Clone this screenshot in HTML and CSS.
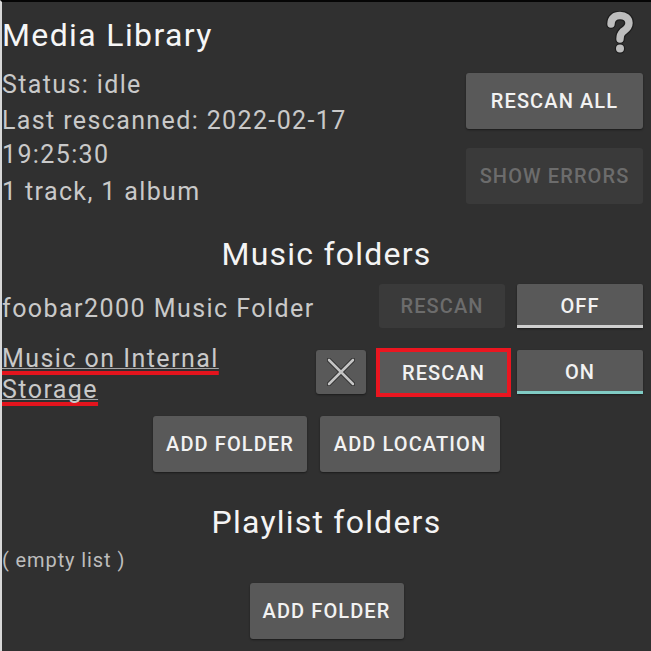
FILE: index.html
```html
<!DOCTYPE html>
<html>
<head>
<meta charset="utf-8">
<link rel="stylesheet" href="styles.css">
</head>
<body>
<div class="page">
  <header class="head">
    <h1 class="title">Media Library</h1>
    <svg class="help" viewBox="0 0 30 44" width="30" height="44" aria-label="help">
      <path class="help-out" d="M7 13 C7 7 11 4.5 16 4.5 C21 4.5 25 7 25 12 C25 17 21 19 18.5 21 C16.5 23 16 25 16 28"/>
      <circle class="help-dot-out" cx="16" cy="37.5" r="5.2"/>
      <path class="help-in" d="M7 13 C7 7 11 4.5 16 4.5 C21 4.5 25 7 25 12 C25 17 21 19 18.5 21 C16.5 23 16 25 16 28"/>
      <circle class="help-dot" cx="16" cy="37.5" r="4"/>
    </svg>
  </header>

  <section class="summary">
    <div class="status">
      <p class="line">Status: idle</p>
      <p class="line l-last">Last rescanned: 2022-02-17<br>19:25:30</p>
      <p class="line l-count">1 track, 1 album</p>
    </div>
    <div class="actions">
      <button class="btn big">RESCAN ALL</button>
      <button class="btn big disabled">SHOW ERRORS</button>
    </div>
  </section>

  <h2 class="heading h-music">Music folders</h2>

  <div class="folder row1">
    <div class="fname">foobar2000 Music Folder</div>
    <button class="btn mid disabled">RESCAN</button>
    <button class="btn mid toggle off">OFF</button>
  </div>

  <div class="folder row2">
    <div class="fname two"><span class="mark"><span class="link">Music on Internal</span></span><br><span class="mark"><span class="link">Storage</span></span></div>
    <button class="btn remove" aria-label="remove">
      <svg viewBox="0 0 28 28" width="28" height="28">
        <path class="x-out" d="M2 2 L26 26 M26 2 L2 26"/>
        <path class="x-in" d="M2 2 L26 26 M26 2 L2 26"/>
      </svg>
    </button>
    <div class="flag-box"><button class="btn flagged">RESCAN</button></div>
    <button class="btn mid toggle on">ON</button>
  </div>

  <div class="center-row add-row">
    <button class="btn big add-folder">ADD FOLDER</button>
    <button class="btn big add-loc">ADD LOCATION</button>
  </div>

  <h2 class="heading h-playlist">Playlist folders</h2>
  <p class="empty">( empty list )</p>

  <div class="center-row pl-row">
    <button class="btn big add-folder">ADD FOLDER</button>
  </div>
</div>
</body>
</html>
```

FILE: styles.css
```css
html, body {
  margin: 0;
  padding: 0;
}
body {
  width: 651px;
  height: 651px;
  overflow: hidden;
  box-sizing: border-box;
  background: #303030;
  border-top: 2px solid #050505;
  border-left: 2px solid #d8d8d8;
  font-family: Roboto, "Noto Sans", sans-serif;
  color: #c9c9c9;
}
.page {
  display: flex;
  flex-direction: column;
}
.head {
  display: flex;
  justify-content: space-between;
  align-items: flex-start;
}
.title {
  margin: 13px 0 0 0;
  font-size: 32px;
  line-height: 40px;
  font-weight: 400;
  color: #f6f6f6;
  letter-spacing: 0.043em;
}
.help {
  margin: 9px 17px 0 0;
}
.help-out, .help-in {
  fill: none;
  stroke-linecap: round;
  stroke-linejoin: round;
}
.help-out { stroke: #1e1e1e; stroke-width: 10; }
.help-in { stroke: #bdbdbd; stroke-width: 7.4; }
.help-dot-out { fill: #1e1e1e; }
.help-dot { fill: #bdbdbd; }

.summary {
  display: flex;
  justify-content: space-between;
  align-items: flex-start;
  margin-top: 13px;
}
.line {
  margin: 0;
  font-size: 25px;
  line-height: 34px;
  letter-spacing: 0.055em;
}
.l-last { margin-top: 1.5px; }
.l-count { margin-top: 3px; }
.actions {
  display: flex;
  flex-direction: column;
  gap: 19px;
  margin: 5px 8px 0 0;
}

.btn {
  font-family: Roboto, "Noto Sans", sans-serif;
  font-weight: 500;
  font-size: 20px;
  color: #f2f2f2;
  background: #595959;
  border: 0;
  border-radius: 3px;
  padding: 0;
  box-shadow: 0 1px 2px rgba(0, 0, 0, 0.45);
  letter-spacing: 0.055em;
}
.btn.big {
  height: 56px;
}
.actions .btn {
  width: 177px;
}
.btn.disabled {
  background: #3a3a3a;
  color: #6c6c6c;
  box-shadow: none;
}
.heading {
  margin: 0;
  font-size: 32px;
  line-height: 40px;
  font-weight: 400;
  color: #f4f4f4;
  text-align: center;
  letter-spacing: 0.038em;
}
.h-music { margin-top: 25.5px; }

.folder {
  display: flex;
  align-items: flex-start;
  padding-right: 8px;
}
.fname {
  flex: 1;
  font-size: 25px;
  line-height: 34px;
  letter-spacing: 0.058em;
}
.row1 { margin-top: 10px; }
.row1 .fname { margin-top: 7.5px; }
.btn.mid {
  height: 44px;
  width: 126px;
}
.row1 .disabled { margin-right: 12px; }
.toggle {
  position: relative;
  border-radius: 2px;
}
.toggle::after {
  content: "";
  position: absolute;
  left: 0;
  right: 0;
  bottom: 0;
  height: 3px;
}
.toggle.off::after { background: #cfcfcf; }
.toggle.on::after { background: #80cbc4; }

.row2 { margin-top: 15px; }
.fname.two {
  line-height: 31px;
}
.mark {
  text-decoration: underline;
  text-decoration-color: #e3141d;
  text-decoration-thickness: 3.5px;
  text-underline-offset: 4px;
  text-decoration-skip-ink: none;
}
.link {
  text-decoration: underline;
  text-decoration-color: #a8a8a8;
  text-decoration-thickness: 1px;
  text-underline-offset: 1px;
}
.row2 .remove,
.row2 .toggle { margin-top: 7px; }
.remove {
  width: 50px;
  height: 44px;
  display: flex;
  align-items: center;
  justify-content: center;
}
.x-out { stroke: #2a2a2a; stroke-width: 4.5; stroke-linecap: round; fill: none; }
.x-in { stroke: #c4c4c4; stroke-width: 2.6; stroke-linecap: round; fill: none; }
.flag-box {
  display: flex;
  border: 4px solid #ea1620;
  margin: 5px 6px 0 10px;
}
.btn.flagged {
  width: 127px;
  height: 41px;
  border-radius: 0;
  box-shadow: none;
}

.center-row {
  display: flex;
  justify-content: center;
  gap: 13px;
}
.add-row { margin-top: 11px; }
.add-folder { width: 154px; }
.add-loc { width: 180px; }
.h-playlist { margin-top: 30px; }
.empty {
  margin: 5px 0 0 0;
  font-size: 20px;
  line-height: 26px;
  color: #bdbdbd;
  letter-spacing: 0.045em;
}
.pl-row { margin-top: 10px; }
```
